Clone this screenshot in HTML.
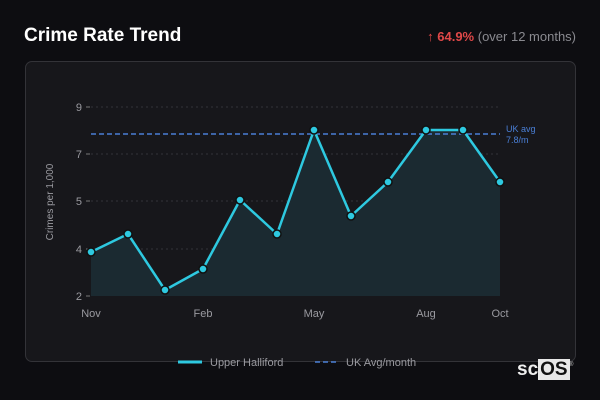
<!DOCTYPE html>
<html><head><style>
body{margin:0;width:600px;height:400px;background:#0d0d11;font-family:"Liberation Sans","DejaVu Sans",sans-serif;position:relative;overflow:hidden}
.t{position:absolute;left:24px;top:25px;color:#fff;font-weight:bold;font-size:19px;font-family:"Liberation Sans",sans-serif}
.r{position:absolute;right:24px;top:29px;font-size:13px;color:#8a8a90;font-family:"Liberation Sans",sans-serif}
.r b{color:#e04848}
.card{position:absolute;left:25px;top:61px;width:549px;height:299px;background:#17171b;border:1px solid #333338;border-radius:7px}
svg{position:absolute;left:0;top:0}
.logo{position:absolute;left:517px;top:359px;font-size:19px;font-weight:bold;color:#eee;font-family:"Liberation Sans",sans-serif}
.logo span{background:#e8e8e8;color:#111;padding:0 2px}
</style></head><body>
<div class="t">Crime Rate Trend</div>
<div class="r"><b>↑ 64.9%</b> (over 12 months)</div>
<div class="card"></div>
<svg width="600" height="400" font-family="Liberation Sans,sans-serif">
<g stroke="#333338" stroke-dasharray="2,3" stroke-width="1">
<line x1="91" y1="107" x2="500" y2="107"/><line x1="91" y1="154" x2="500" y2="154"/>
<line x1="91" y1="201" x2="500" y2="201"/><line x1="91" y1="249" x2="500" y2="249"/>
</g>
<g stroke="#777" stroke-width="1"><line x1="86" y1="107" x2="90" y2="107"/><line x1="86" y1="154" x2="90" y2="154"/><line x1="86" y1="201" x2="90" y2="201"/><line x1="86" y1="249" x2="90" y2="249"/><line x1="86" y1="296" x2="90" y2="296"/></g>
<g fill="#9a9aa0" font-size="11" text-anchor="end"><text x="82" y="111">9</text><text x="82" y="158">7</text><text x="82" y="205">5</text><text x="82" y="253">4</text><text x="82" y="300">2</text></g>
<text transform="translate(53,202) rotate(-90)" fill="#9a9aa0" font-size="10" text-anchor="middle">Crimes per 1,000</text>
<g fill="#9a9aa0" font-size="11" text-anchor="middle"><text x="91" y="317">Nov</text><text x="203" y="317">Feb</text><text x="314" y="317">May</text><text x="426" y="317">Aug</text><text x="500" y="317">Oct</text></g>
<path d="M91,252 L128,234 L165,290 L203,269 L240,200 L277,234 L314,130 L351,216 L388,182 L426,130 L463,130 L500,182 L500,296 L91,296Z" fill="#1b2a31"/>
<line x1="91" y1="134" x2="500" y2="134" stroke="#4a7fd6" stroke-width="1.5" stroke-dasharray="5,3"/>
<text x="506" y="132" fill="#4a7fd6" font-size="9">UK avg</text><text x="506" y="143" fill="#4a7fd6" font-size="9">7.8/m</text>
<polyline points="91,252 128,234 165,290 203,269 240,200 277,234 314,130 351,216 388,182 426,130 463,130 500,182" fill="none" stroke="#2ec9e0" stroke-width="2.5" stroke-linejoin="round"/>
<g fill="#2ec9e0" stroke="#111" stroke-width="1.5">
<circle cx="91" cy="252" r="4"/><circle cx="128" cy="234" r="4"/><circle cx="165" cy="290" r="4"/><circle cx="203" cy="269" r="4"/><circle cx="240" cy="200" r="4"/><circle cx="277" cy="234" r="4"/><circle cx="314" cy="130" r="4"/><circle cx="351" cy="216" r="4"/><circle cx="388" cy="182" r="4"/><circle cx="426" cy="130" r="4"/><circle cx="463" cy="130" r="4"/><circle cx="500" cy="182" r="4"/></g>
<line x1="178" y1="362" x2="202" y2="362" stroke="#2ec9e0" stroke-width="3"/>
<text x="210" y="366" fill="#9a9aa0" font-size="11">Upper Halliford</text>
<line x1="315" y1="362" x2="339" y2="362" stroke="#4a7fd6" stroke-width="1.5" stroke-dasharray="5,3"/>
<text x="346" y="366" fill="#9a9aa0" font-size="11">UK Avg/month</text>
<text x="569" y="366" fill="#ccc" font-size="6">®</text>
</svg>
<div class="logo">sc<span>OS</span></div>
</body></html>
